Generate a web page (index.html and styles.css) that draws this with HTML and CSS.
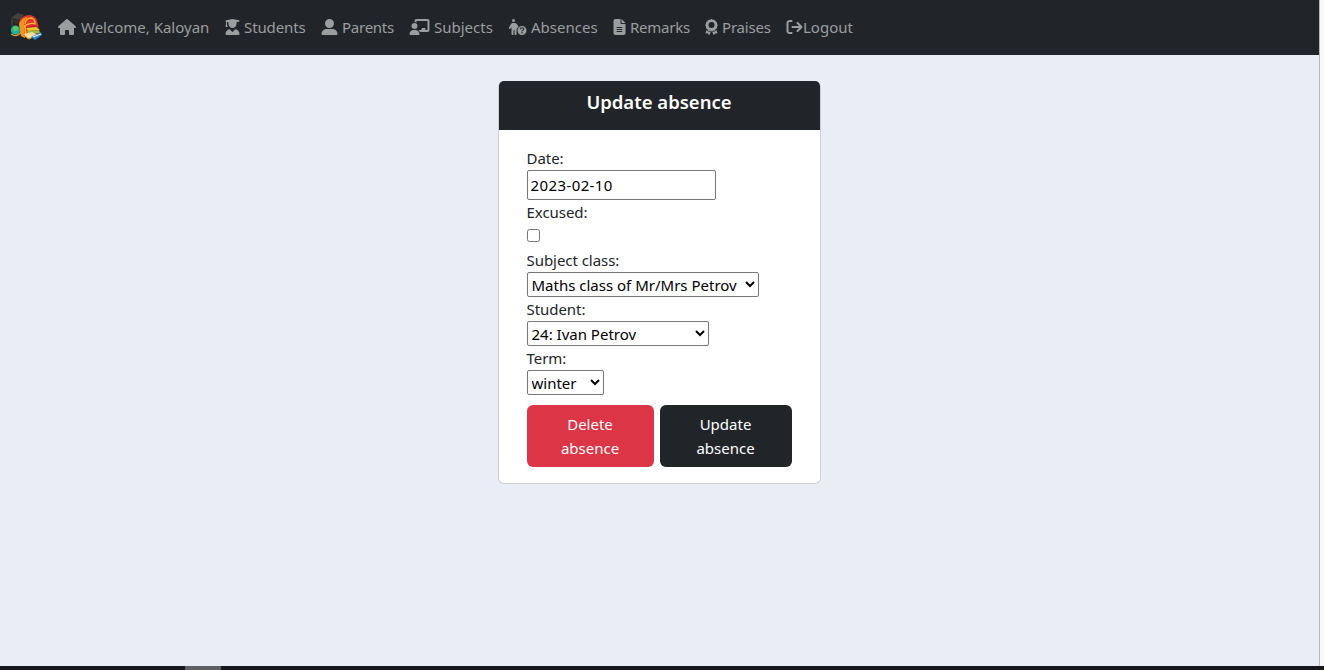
FILE: index.html
```html
<!DOCTYPE html>
<html lang="en">
<head>
<meta charset="utf-8">
<title>Update absence</title>
<link rel="stylesheet" href="styles.css">
</head>
<body>
<div class="window">
<div class="page">
<nav class="navbar">
  <a class="brand" href="#" aria-label="School diary">
    <svg class="brand-logo" viewBox="0 0 32 32">
      <path d="M9 12Q11 4 20 4Q27 5 28 13L29 23Q20 29 11 25Z" fill="#e5352b"/>
      <path d="M11 25L9 13Q12 6 18 6Q14 9 14 15L15 27Z" fill="#f8911c"/>
      <path d="M15 13Q16 7 21 7Q25 8 25 12" fill="none" stroke="#ffb52b" stroke-width="1.3"/>
      <path d="M16 16L26 14L27 20L17 21Z" fill="#c71f2b"/>
      <path d="M14 15Q20 11 26 13" fill="none" stroke="#ffc43a" stroke-width="1.3"/>
      <path d="M15 15L16 25" stroke="#ffb52b" stroke-width="1.6"/>
      <path d="M1 7L8 2L14 4L10 9Z" fill="#45413f"/>
      <path d="M3 9L9 9L8 13L4 12Z" fill="#34312f"/>
      <path d="M2 8V15" stroke="#6b5340" stroke-width="1"/>
      <circle cx="5.5" cy="19" r="4.6" fill="#1cb5a5"/>
      <path d="M3 16Q7 14 8 18Q6 21 4 20Z" fill="#67c84a"/>
      <path d="M1 23Q7 27 11 21" fill="none" stroke="#e0a030" stroke-width="1.3"/>
      <path d="M16 17L26 16L30 19L18 20Z" fill="#e8c92e"/>
      <path d="M17 20L29 19L30 22L18 23Z" fill="#9cbb37"/>
      <path d="M14 23L22 21L28 24L18 28Z" fill="#f0e0a0"/>
      <path d="M15 25L19 28L23 26" fill="none" stroke="#e0a82e" stroke-width="1"/>
      <path d="M21 26L31 21L32 24L25 29Z" fill="#2585c7"/>
      <path d="M23 26L31 23" stroke="#e8f1f6" stroke-width="1.2"/>
    </svg>
  </a>
  <a class="nav-item home" href="#"><svg class="icon" viewBox="0 0 576 512"><path d="M575.8 255.5c0 18-15 32.1-32 32.1h-32l.7 160.2c0 2.7-.2 5.4-.5 8.1V472c0 22.1-17.9 40-40 40H392c-22.1 0-40-17.9-40-40V384c0-17.7-14.3-32-32-32H256c-17.7 0-32 14.3-32 32v88c0 22.1-17.9 40-40 40H104c-22.1 0-40-17.9-40-40V287.6H32c-18 0-32-14-32-32.1c0-9 3-17 10-24L266.4 8c7-7 15-8 22-8s15 2 21 7L564.8 231.5c8 7 12 15 11 24z"/></svg><span>Welcome, Kaloyan</span></a>
  <a class="nav-item students" href="#"><svg class="icon" viewBox="0 0 448 512"><path d="M219.3 .5c3.1-.6 6.3-.6 9.4 0l200 40C439.9 42.7 448 52.6 448 64s-8.1 21.3-19.3 23.5L352 102.9V160c0 70.7-57.3 128-128 128s-128-57.3-128-128V102.9L48 93.3v65.1l15.7 78.4c.9 4.7-.3 9.6-3.3 13.3s-7.6 5.9-12.4 5.9H16c-4.8 0-9.3-2.1-12.4-5.9s-4.3-8.6-3.3-13.3L16 158.4V86.6C6.5 83.3 0 74.3 0 64C0 52.6 8.1 42.7 19.3 40.5l200-40zM111.9 327.7c10.5-3.4 21.8 .4 29.4 8.5l71 75.5c6.3 6.7 17 6.7 23.3 0l71-75.5c7.6-8.1 18.9-11.9 29.4-8.5C401 348.6 448 409.4 448 481.3c0 17-13.8 30.7-30.7 30.7H30.7C13.8 512 0 498.2 0 481.3c0-71.9 47-132.7 111.9-153.6z"/></svg><span>Students</span></a>
  <a class="nav-item parents" href="#"><svg class="icon" viewBox="0 0 512 512"><path d="M256 288A144 144 0 1 0 256 0a144 144 0 1 0 0 288zm-94.7 32C72.2 320 0 392.2 0 481.3c0 17 13.8 30.7 30.7 30.7H481.3c17 0 30.7-13.8 30.7-30.7C512 392.2 439.8 320 350.7 320H161.3z"/></svg><span>Parents</span></a>
  <a class="nav-item subjects" href="#"><svg class="icon" viewBox="0 0 640 512"><path d="M160 64c0-35.3 28.7-64 64-64H576c35.3 0 64 28.7 64 64V352c0 35.3-28.7 64-64 64H336.8c-11.8-25.5-29.9-47.5-52.4-64H384V320c0-17.7 14.3-32 32-32h64c17.7 0 32 14.3 32 32v32h64V64L224 64v49.1C205.2 102.2 183.3 96 160 96V64zm0 64a96 96 0 1 1 0 192 96 96 0 1 1 0-192zM133.3 352h53.3C260.3 352 320 411.7 320 485.3c0 14.7-11.9 26.7-26.7 26.7H26.7C11.9 512 0 500.1 0 485.3C0 411.7 59.7 352 133.3 352z"/></svg><span>Subjects</span></a>
  <a class="nav-item absences" href="#"><svg class="icon" viewBox="0 0 576 512"><circle cx="160" cy="48" r="48"/><path fill-rule="evenodd" d="M125 128h70c33 0 64 17 81 45l46 76c-37 24-62 64-66 109v122c0 18-14 32-32 32s-32-14-32-32V352h-32v128c0 18-14 32-32 32s-32-14-32-32V257l-29 47c-9 15-28 20-43 11s-20-28-11-43l58-97c17-29 48-47 54-47z"/><path fill-rule="evenodd" d="M432 224a144 144 0 1 1 0 288a144 144 0 1 1 0-288zM432 416a24 24 0 1 0 0 48a24 24 0 1 0 0-48zM405 272c-22 0-41 16-45 38c-3 21 28 26 32 6c1-6 6-12 13-12h52c22 0 22 22 10 28l-42 24c-7 4-9 9-9 16v16c0 21 32 21 32 0v-7l36-20c37-22 24-89-25-89z"/></svg><span>Absences</span></a>
  <a class="nav-item remarks" href="#"><svg class="icon" viewBox="0 0 384 512"><path fill-rule="evenodd" d="M64 0C28.7 0 0 28.7 0 64V448c0 35.3 28.7 64 64 64H320c35.3 0 64-28.7 64-64V160H256c-17.7 0-32-14.3-32-32V0H64zM256 0V128H384L256 0zM112 256H272c21 0 21 32 0 32H112c-21 0-21-32 0-32zm0 64H272c21 0 21 32 0 32H112c-21 0-21-32 0-32zm0 64H272c21 0 21 32 0 32H112c-21 0-21-32 0-32z"/></svg><span>Remarks</span></a>
  <a class="nav-item praises" href="#"><svg class="icon" viewBox="0 0 384 512"><path fill-rule="evenodd" d="M173 5c12-7 26-7 38 0l28 17 33 1c14 0 26 8 33 20l16 28 28 16c12 7 20 19 20 33l1 33 17 28c7 12 7 26 0 38l-17 28-1 33c0 14-8 26-20 33l-28 16-16 28c-7 12-19 20-33 20l-33 1-28 17c-12 7-26 7-38 0l-28-17-33-1c-14 0-26-8-33-20l-16-28-28-16c-12-7-20-19-20-33l-1-33-17-28c-7-12-7-26 0-38l17-28 1-33c0-14 8-26 20-33l28-16 16-28c7-12 19-20 33-20l33-1zM192 96a96 96 0 1 0 0 192a96 96 0 1 0 0-192z"/><path d="M44 338l-42 100c-5 12 4 23 18 22l51-8 31 51c6 10 20 12 26 0l49-114c-41 28-47 14-84 12-26-3-42-27-49-63zM340 338l42 100c5 12-4 23-18 22l-51-8-31 51c-6 10-20 12-26 0l-49-114c41 28 47 14 84 12 26-3 42-27 49-63z"/></svg><span>Praises</span></a>
  <a class="nav-item logout" href="#"><svg class="icon" viewBox="0 0 512 512"><path d="M502.6 278.6c12.5-12.5 12.5-32.8 0-45.3l-128-128c-12.5-12.5-32.8-12.5-45.3 0s-12.5 32.8 0 45.3L402.7 224 192 224c-17.7 0-32 14.3-32 32s14.3 32 32 32l210.7 0-73.4 73.4c-12.5 12.5-12.5 32.8 0 45.3s32.8 12.5 45.3 0l128-128zM160 96c17.7 0 32-14.3 32-32s-14.3-32-32-32L96 32C43 32 0 75 0 128L0 384c0 53 43 96 96 96l64 0c17.7 0 32-14.3 32-32s-14.3-32-32-32l-64 0c-17.7 0-32-14.3-32-32l0-256c0-17.7 14.3-32 32-32l64 0z"/></svg><span>Logout</span></a>
</nav>
<main class="content">
  <section class="card">
    <header class="card-header"><h1 class="card-title">Update absence</h1></header>
    <form class="card-body">
      <label class="label" for="date">Date:</label>
      <input class="date" id="date" type="text" value="2023-02-10">
      <label class="label" for="excused">Excused:</label>
      <input class="check" id="excused" type="checkbox">
      <label class="label" for="subject">Subject class:</label>
      <select class="select select-subject" id="subject"><option>Maths class of Mr/Mrs Petrov</option></select>
      <label class="label" for="student">Student:</label>
      <select class="select select-student" id="student"><option>24: Ivan Petrov</option></select>
      <label class="label" for="term">Term:</label>
      <select class="select select-term" id="term"><option>winter</option></select>
      <div class="actions">
        <button class="btn btn-danger" type="button">Delete<br>absence</button>
        <button class="btn btn-dark" type="button">Update<br>absence</button>
      </div>
    </form>
  </section>
</main>
</div>
<div class="gutter"></div>
</div>
<div class="bottom-bar"><div class="bottom-thumb"></div></div>
</body>
</html>
```
FILE: styles.css
```css
* { box-sizing: border-box; }
body {
  margin: 0;
  height: 670px;
  display: flex;
  flex-direction: column;
  overflow: hidden;
  font: 15px/24px "Noto Sans", "Open Sans", sans-serif;
  color: #212529;
}
.window { flex: 1; display: flex; }
.page { flex: 1; background: #eaedf5; }
.gutter { width: 5px; background: #f8f8f8; border-left: 1px solid #b9babc; }
.bottom-bar { height: 4px; padding-left: 185px; background: #18171e; }
.bottom-thumb { width: 36px; height: 4px; background: #5f5f63; }

.navbar { display: flex; align-items: center; height: 55px; padding: 0 0 1px 10px; background: #212529; }
.brand { display: flex; width: 48px; }
.brand-logo { width: 32px; height: 32px; }
.nav-item {
  display: flex;
  align-items: center;
  height: 24px;
  color: #9b9d9f;
  text-decoration: none;
  white-space: nowrap;
}
.icon { height: 16px; flex: none; fill: currentColor; }
.home { width: 167px; }
.students { width: 96px; letter-spacing: -0.1px; }
.parents { width: 88px; letter-spacing: -0.25px; }
.subjects { width: 99px; }
.absences { width: 105px; }
.remarks { width: 92px; letter-spacing: -0.25px; }
.praises { width: 81px; letter-spacing: -0.2px; }
.home .icon { width: 18px; margin-right: 5px; }
.students .icon { width: 15px; margin-right: 4px; }
.parents .icon { width: 17px; margin-right: 4px; }
.subjects .icon { width: 21px; margin-right: 4px; }
.absences .icon { width: 19px; margin-right: 4px; }
.remarks .icon { width: 13px; margin-right: 4px; }
.praises .icon { width: 13px; margin-right: 4px; }
.logout .icon { width: 17px; }

.content { display: flex; justify-content: center; padding: 26px 1px 0 0; }
.card {
  width: 323px;
  height: 403px;
  background: #fff;
  border: 1px solid #cdd0d6;
  border-top: 0;
  border-radius: 6px;
}
.card-header {
  height: 49px;
  padding-top: 9px;
  background: #212529;
  border-radius: 5px 5px 0 0;
}
.card-title { margin: 0; font-size: 18.5px; line-height: 24px; font-weight: 600; text-align: center; color: #fff; }
.card-body { display: flex; flex-direction: column; align-items: flex-start; padding: 16px 28px 0; }
.label { height: 24px; line-height: 24px; letter-spacing: -0.05px; }
.date { width: 189px; height: 30px; padding: 1px 3px; border: 1px solid #767676; border-radius: 2px; font: inherit; letter-spacing: 0.4px; color: #000; }
.check { width: 13px; height: 13px; margin: 5px 0 6px; }
.select { height: 25px; padding: 0; border: 1px solid #767676; border-radius: 2px; background: #fff; font: inherit; color: #000; }
.select-subject { width: 232px; }
.select-student { width: 182px; }
.select-term { width: 77px; }
.actions { display: flex; gap: 6px; margin-top: 10px; }
.btn { height: 62px; padding: 7px 0; border: 0; border-radius: 6px; font: inherit; color: #fff; }
.btn-danger { width: 127px; background: #dc3545; }
.btn-dark { width: 132px; background: #212529; }
```
